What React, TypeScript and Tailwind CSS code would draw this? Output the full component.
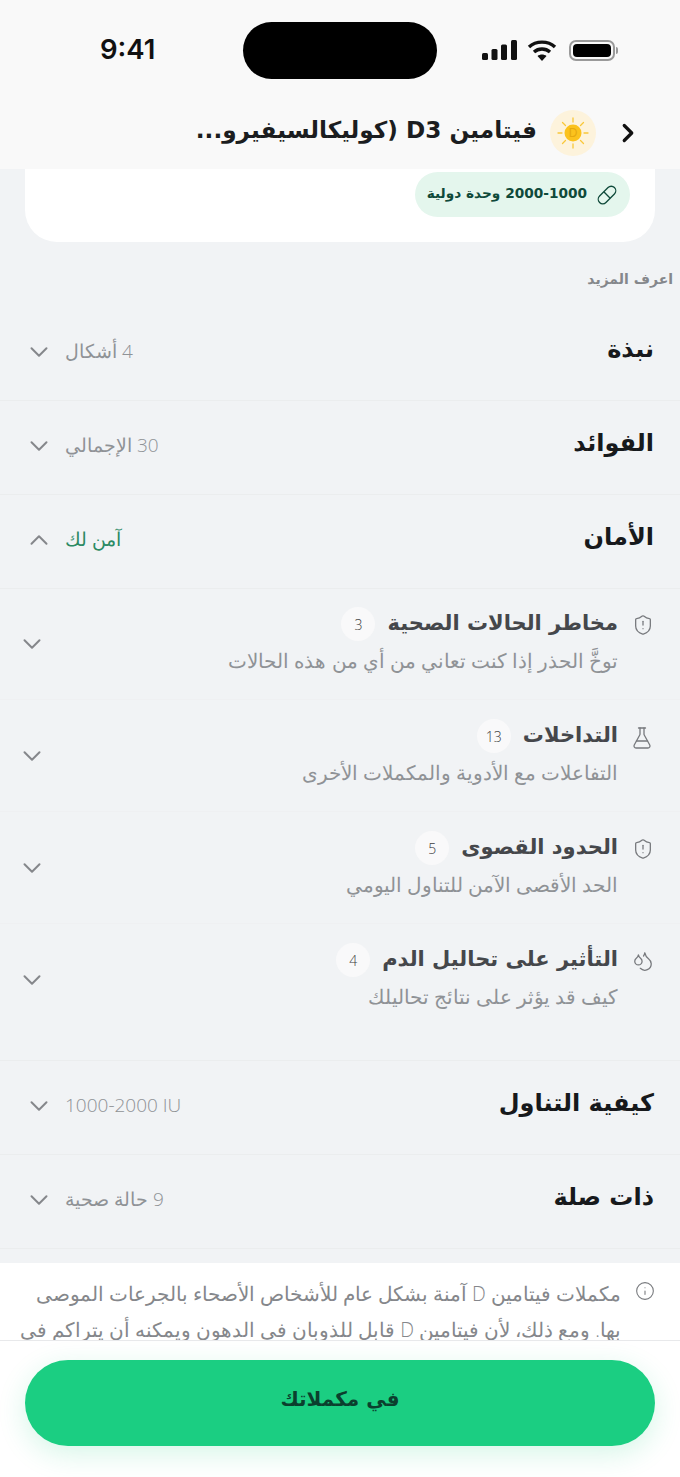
import { ChevronDown, ChevronUp, ChevronRight, ShieldAlert, FlaskConical, Droplets, Info } from "lucide-react";

const font = "font-['Open_Sans','DejaVu_Sans',sans-serif]";
const bold = "font-['DejaVu_Sans',sans-serif] font-bold";

function Row({ title, sub, open, green }: { title: string; sub: string; open?: boolean; green?: boolean }) {
  return (
    <div dir="rtl" className="h-[94px] border-b border-[#ebedee] flex items-center justify-between pl-[24px] pr-[26px] pb-[8px]">
      <div className={`text-[24px] pb-[2px] text-[#17191c] ${bold}`}>{title}</div>
      <div className="flex items-center gap-[11px] mt-[4px]">
        <div dir="auto" className={green ? "text-[19px] font-light text-[#2b8a63]" : "text-[19px] font-light text-[#8f9296]"}>{sub}</div>
        {open ? <ChevronUp size={30} strokeWidth={1.6} className="text-[#85878b]" /> : <ChevronDown size={30} strokeWidth={1.6} className="text-[#85878b]" />}
      </div>
    </div>
  );
}

function Sub({ icon, title, count, desc, last }: { icon: React.ReactNode; title: string; count: string; desc: string; last?: boolean }) {
  return (
    <div dir="rtl" className={last ? "h-[112px] flex items-center justify-between pr-[26px] pl-[17px]" : "h-[112px] flex items-center justify-between pr-[26px] pl-[17px] border-b border-[#eff0f2]"}>
      <div className="flex gap-[14px] self-start pt-[19px]">
        <div className="w-[22px] pt-[7px] text-[#77797d]">{icon}</div>
        <div>
          <div className="flex items-center gap-[12px] h-[34px]">
            <div className={`text-[21px] text-[#45474b] ${bold}`}>{title}</div>
            <div className="w-[34px] h-[34px] rounded-full bg-[#f9f9fa] flex items-center justify-center text-[14px] font-light text-[#3b3d40]">{count}</div>
          </div>
          <div className="text-[19.5px] leading-[28px] font-light text-[#8f9296] mt-[6px]">{desc}</div>
        </div>
      </div>
      <ChevronDown size={30} strokeWidth={1.6} className="text-[#85878b]" />
    </div>
  );
}

export default function App() {
  return (
    <div className={`w-[680px] h-[1477px] overflow-hidden bg-[#f1f3f5] flex flex-col ${font}`}>
      {/* header */}
      <div className="h-[169px] shrink-0 bg-[#f9f9f9] flex flex-col">
        <div className="h-[100px] grid grid-cols-[243px_194px_1fr] items-center">
          <div className="pl-[100px] text-[27.5px] font-semibold text-[#111] font-['Inter',sans-serif]">9:41</div>
          <div className="h-[57px] bg-black rounded-full" />
          <div className="flex items-center gap-[10px] pl-[45px]">
            <svg width="35" height="20" viewBox="0 0 35 20" fill="#111">
              <rect x="0" y="13" width="6" height="7" rx="1.500" />
              <rect x="9.500" y="9" width="6" height="11" rx="1.500" />
              <rect x="19" y="4.500" width="6" height="15.500" rx="1.500" />
              <rect x="29" y="0" width="6" height="20" rx="1.500" />
            </svg>
            <svg width="30" height="22" viewBox="0 0 30 22" fill="none" stroke="#111" strokeWidth="3.400">
              <path d="M2 8c7-6.500 19-6.500 26 0" />
              <path d="M7 13c4.500-4 11.500-4 16 0" />
              <path d="M15 22l-4.500-5c2.500-2 6.500-2 9 0z" fill="#111" stroke="none" />
            </svg>
            <div className="flex items-center gap-[1px] ml-[2px]">
              <div className="w-[38px] h-[13px] rounded-[7px] border-2 border-[#9a9a9a] p-[2px] box-content">
                <div className="w-full h-full bg-black rounded-[4px]" />
              </div>
              <div className="w-[2px] h-[7px] bg-[#9a9a9a] rounded-r" />
            </div>
          </div>
        </div>
        <div dir="rtl" className="flex items-center pr-[37px] pt-[10px]">
          <ChevronRight size={30} strokeWidth={2.600} className="text-[#111]" />
          <div className="w-[46px] h-[46px] rounded-full bg-[#fdf3dc] flex items-center justify-center mr-[17px] ml-[13px]">
            <svg width="34" height="34" viewBox="0 0 34 34">
              <g stroke="#f9c83a" strokeWidth="1.300" strokeLinecap="round">
                <path d="M17 2v4M17 28v4M2 17h4M28 17h4M6.500 6.500l3 3M24.500 24.500l3 3M6.500 27.500l3-3M24.500 9.500l3-3" />
              </g>
              <circle cx="17" cy="17" r="8.500" fill="#fbc21d" />
              <text x="17" y="21" textAnchor="middle" fontSize="12" fill="#e6a90f" fontFamily="Liberation Sans">D</text>
            </svg>
          </div>
          <div className={`text-[23.2px] pb-[6px] text-[#1b1d20] whitespace-nowrap ${bold}`}>فيتامين D3 (كوليكالسيفيرو...</div>
        </div>
      </div>

      {/* card remainder */}
      <div dir="rtl" className="h-[73px] shrink-0 mx-[25px] bg-white rounded-b-[32px] pr-[25px] pt-[3px]">
        <div className={`inline-flex items-center gap-[8px] h-[45px] pr-[11px] pl-[12px] rounded-full bg-[#e4f6ed] text-[#0f4a3a] text-[13.7px] ${bold}`}>
          <svg width="24" height="24" viewBox="0 0 24 24" fill="none" stroke="#0f4a3a" strokeWidth="1.300">
            <g transform="rotate(45 12 12)">
              <rect x="7.500" y="1.500" width="9" height="21" rx="4.500" />
              <path d="M7.500 12h9" />
            </g>
          </svg>
          <span className="pb-[3px]">2000-1000 وحدة دولية</span>
        </div>
      </div>

      <div dir="rtl" className={`pr-[7px] pt-[27px] h-[65px] shrink-0 text-[14px] text-[#85878b] ${bold}`}>اعرف المزيد</div>

      <Row title="نبذة" sub="4 أشكال" />
      <Row title="الفوائد" sub="30 الإجمالي" />
      <Row title="الأمان" sub="آمن لك" open green />

      <div className="-mt-[1px]">
        <Sub icon={<ShieldAlert size={22} strokeWidth={1.400} />} title="مخاطر الحالات الصحية" count="3" desc="توخَّ الحذر إذا كنت تعاني من أي من هذه الحالات" />
        <Sub icon={<FlaskConical size={24} strokeWidth={1.300} />} title="التداخلات" count="13" desc="التفاعلات مع الأدوية والمكملات الأخرى" />
        <Sub icon={<ShieldAlert size={22} strokeWidth={1.400} />} title="الحدود القصوى" count="5" desc="الحد الأقصى الآمن للتناول اليومي" />
        <Sub icon={<Droplets size={22} strokeWidth={1.400} />} title="التأثير على تحاليل الدم" count="4" desc="كيف قد يؤثر على نتائج تحاليلك" last />
      </div>

      <div className="h-[25px] shrink-0 border-b border-[#ebedee]" />
      <Row title="كيفية التناول" sub="1000-2000 IU" />
      <Row title="ذات صلة" sub="9 حالة صحية" />

      {/* info panel, cut off by the footer */}
      <div className="h-[14px] shrink-0" />
      <div dir="rtl" className="h-[77px] shrink-0 bg-white overflow-hidden flex gap-[14px] pr-[25px] pl-[14px] pt-[18px]">
        <Info size={20} strokeWidth={1.300} className="shrink-0 text-[#77797d]" />
        <div className="text-[19.5px] leading-[36px] -mt-[5px] font-light text-[#85878b]">
          مكملات فيتامين D آمنة بشكل عام للأشخاص الأصحاء بالجرعات الموصى بها. ومع ذلك، لأن فيتامين D قابل للذوبان في الدهون ويمكنه أن يتراكم في
        </div>
      </div>

      {/* footer */}
      <div className="flex-1 bg-white border-t border-[#e8e9eb] px-[25px] pt-[19px]">
        <div className={`h-[86px] pb-[8px] rounded-full bg-[#1bce82] shadow-[0_8px_28px_rgba(27,206,130,0.18)] flex items-center justify-center text-[20px] text-[#0b3f2e] ${bold}`}>
          في مكملاتك
        </div>
      </div>
    </div>
  );
}
